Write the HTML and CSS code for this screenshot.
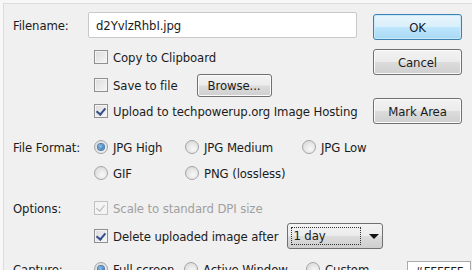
FILE: index.html
```html
<!DOCTYPE html>
<html lang="en">
<head>
    <meta charset="UTF-8">
    <title>Capture Settings</title>
    <link rel="stylesheet" href="styles.css">
</head>
<body>
    <div class="frame">
        <div class="top">
            <div class="form">
                <div class="row r-file">
                    <label class="lbl" for="filename">Filename:</label>
                    <input type="text" id="filename" class="textbox" value="d2YvlzRhbI.jpg">
                </div>
                <div class="row r-copy">
                    <span class="opt"><span class="check"></span>Copy to Clipboard</span>
                </div>
                <div class="row r-save">
                    <span class="opt"><span class="check"></span>Save to file</span>
                    <button type="button" class="btn browse">Browse...</button>
                </div>
                <div class="row r-upload">
                    <span class="opt"><span class="check on"></span>Upload to techpowerup.org Image Hosting</span>
                </div>
            </div>
            <div class="side">
                <button type="button" class="btn default ok">OK</button>
                <button type="button" class="btn cancel">Cancel</button>
                <button type="button" class="btn mark">Mark Area</button>
            </div>
        </div>

        <div class="row r-fmt1">
            <span class="lbl">File Format:</span>
            <span class="opt c1"><span class="radio on"></span>JPG High</span>
            <span class="opt c2"><span class="radio"></span>JPG Medium</span>
            <span class="opt"><span class="radio"></span>JPG Low</span>
        </div>
        <div class="row r-fmt2">
            <span class="lbl"></span>
            <span class="opt c1"><span class="radio"></span>GIF</span>
            <span class="opt"><span class="radio"></span>PNG (lossless)</span>
        </div>
        <div class="row r-opt1">
            <span class="lbl">Options:</span>
            <span class="opt disabled"><span class="check on"></span>Scale to standard DPI size</span>
        </div>
        <div class="row r-opt2">
            <span class="lbl"></span>
            <span class="opt"><span class="check on"></span>Delete uploaded image after</span>
            <div class="combo"><span class="focus">1 day</span><span class="arrow"></span></div>
        </div>
        <div class="row r-cap">
            <span class="lbl">Capture:</span>
            <span class="opt k1"><span class="radio on"></span>Full screen</span>
            <span class="opt k2"><span class="radio"></span>Active Window</span>
            <span class="opt k3"><span class="radio"></span>Custom</span>
            <span class="colorbox">#FFFFFF</span>
        </div>
    </div>
</body>
</html>
```

FILE: styles.css
```css
body {
	margin: 0;
	padding: 0;
	background-color: #f7f7f7;
	font-family: "DejaVu Sans Condensed", "DejaVu Sans", sans-serif;
	font-stretch: condensed;
	font-size: 13px;
	letter-spacing: -0.1px;
	color: #1b1b1b;
	overflow: hidden;
}
.frame {
	margin: 3px 0 0 3px;
	border-top: 1px solid #dcdcdc;
	border-left: 1px solid #dcdcdc;
	background-color: #f0f0f0;
	height: 300px;
	padding-left: 9px;
}
.top {
	display: flex;
}
.form {
	width: 344px;
}
.row {
	display: flex;
	align-items: center;
	height: 24px;
}
.lbl {
	width: 81px;
	flex-shrink: 0;
}
.r-file {
	height: 26px;
	margin-top: 8px;
}
.r-copy { margin-top: 7px; padding-left: 81px; }
.r-save { margin-top: 4px; padding-left: 81px; }
.r-upload { margin-top: 2px; padding-left: 81px; }
.r-fmt1 { margin-top: 11px; }
.r-fmt2 { margin-top: 2px; }
.r-opt1 { margin-top: 11px; }
.r-opt2 { margin-top: 3px; height: 26px; }
.r-cap { margin-top: 8px; }

.textbox {
	font: inherit;
	letter-spacing: inherit;
	color: inherit;
	width: 269px;
	height: 26px;
	box-sizing: border-box;
	margin-left: -6px;
	padding: 0 7px;
	border: 1px solid #c9c9c9;
	border-radius: 2px;
	background-color: #fff;
	outline: none;
}

.opt {
	display: flex;
	align-items: center;
	white-space: nowrap;
}
.opt.disabled {
	color: #a0a0a0;
}
.c1 { width: 91px; }
.c2 { width: 117px; }
.k1 { width: 90px; }
.k2 { width: 122px; }
.k3 { width: 93px; }

.check {
	width: 12px;
	height: 12px;
	border: 1px solid #8e8f8f;
	background: linear-gradient(135deg, #dcdcdc, #f6f6f6);
	box-shadow: inset 0 0 0 1px #f4f4f4;
	margin-right: 5px;
	position: relative;
	flex-shrink: 0;
}
.check.on::after {
	content: "";
	position: absolute;
	left: 3px;
	top: 1px;
	width: 4px;
	height: 7px;
	border-right: 2px solid #35508e;
	border-bottom: 2px solid #35508e;
	transform: rotate(40deg);
}
.disabled .check {
	border-color: #c2c2c2;
	background: #f4f4f4;
}
.disabled .check.on::after {
	border-color: #b5b5b5;
	border-width: 0 1px 1px 0;
}

.radio {
	width: 12px;
	height: 12px;
	border: 1px solid #a4a4a4;
	border-radius: 50%;
	background: radial-gradient(circle at 60% 65%, #f8f8f8, #d4d4d4);
	margin-right: 5px;
	position: relative;
	flex-shrink: 0;
}
.radio.on::after {
	content: "";
	position: absolute;
	left: 3px;
	top: 3px;
	width: 6px;
	height: 6px;
	border-radius: 50%;
	background: radial-gradient(circle at 40% 40%, #8fc7ef, #1d5c99);
	box-shadow: 0 0 0 1px #4e7bb0;
}

.btn {
	font: inherit;
	letter-spacing: inherit;
	color: #1b1b1b;
	border: 1px solid #707070;
	border-radius: 3px;
	background: linear-gradient(#f3f3f3 0%, #ebebeb 48%, #dcdcdc 52%, #cfcfcf 100%);
	box-shadow: inset 0 0 0 1px #fbfbfb;
	padding: 0;
	cursor: default;
}
.btn.default {
	border-color: #3c7fb1;
	background: linear-gradient(#e8f5fc 0%, #d9effb 48%, #bee6fd 52%, #a8d8f3 100%);
	box-shadow: inset 0 0 0 1px #c9eafc;
}
.browse {
	width: 75px;
	height: 23px;
	margin-left: 19px;
}
.side {
	display: flex;
	flex-direction: column;
	margin-left: 16px;
	padding-top: 10px;
}
.side .btn {
	width: 89px;
	height: 26px;
}
.cancel { margin-top: 9px; }
.mark { margin-top: 23px; }

.combo {
	margin-left: 9px;
	width: 96px;
	height: 26px;
	box-sizing: border-box;
	border: 1px solid #707070;
	border-radius: 3px;
	background: linear-gradient(#f3f3f3 0%, #ebebeb 48%, #dcdcdc 52%, #cfcfcf 100%);
	display: flex;
	align-items: center;
	padding: 3px;
}
.focus {
	width: 70px;
	height: 18px;
	box-sizing: border-box;
	line-height: 16px;
	border: 1px dotted #333;
	padding-left: 1px;
}
.arrow {
	margin-left: 8px;
	width: 0;
	height: 0;
	border-left: 5px solid transparent;
	border-right: 5px solid transparent;
	border-top: 5px solid #111;
}

.colorbox {
	margin-left: 8px;
	width: 64px;
	height: 24px;
	margin-top: 8px;
	box-sizing: border-box;
	border: 1px solid #a9a9a9;
	background-color: #fff;
	padding: 2px 0 0 6px;
}
```
